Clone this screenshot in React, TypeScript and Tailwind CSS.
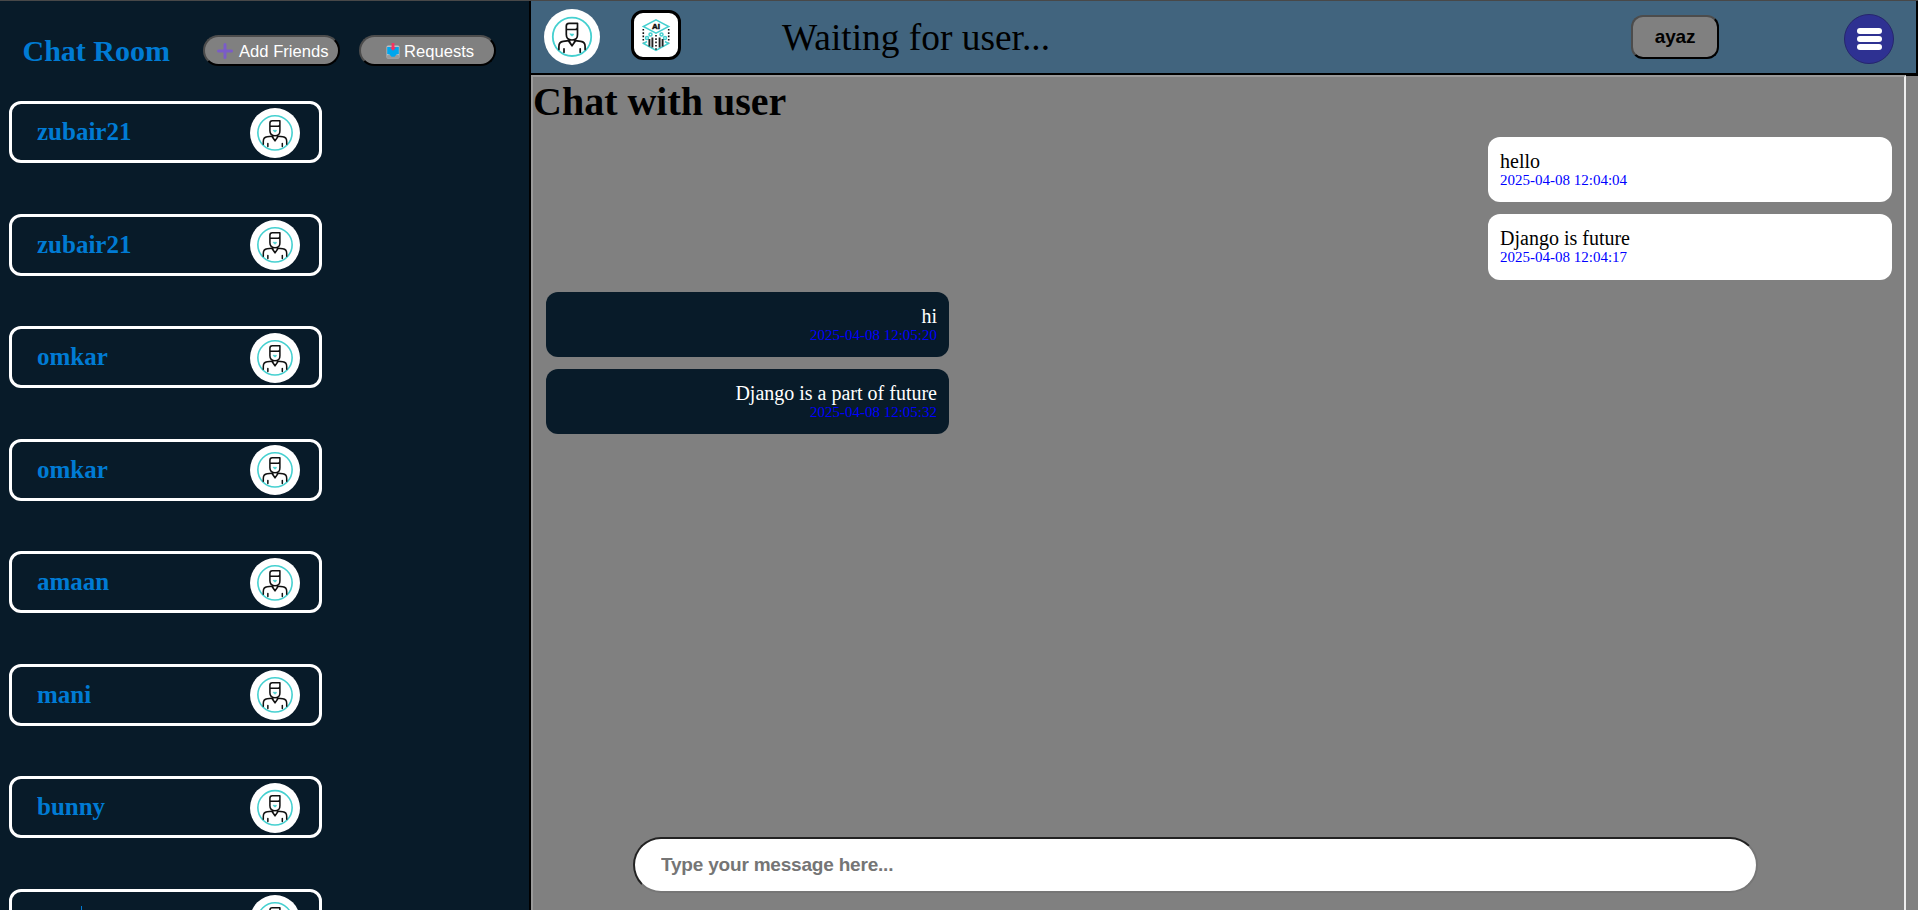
const friends = ["zubair21", "zubair21", "omkar", "omkar", "amaan", "mani", "bunny"];

const messages = [
  { text: "hello", time: "2025-04-08 12:04:04", mine: true },
  { text: "Django is future", time: "2025-04-08 12:04:17", mine: true },
  { text: "hi", time: "2025-04-08 12:05:20", mine: false },
  { text: "Django is a part of future", time: "2025-04-08 12:05:32", mine: false },
];

function Avatar({ className }: { className: string }) {
  return (
    <svg viewBox="0 0 56 56" className={className} fill="none" strokeLinecap="round" strokeLinejoin="round">
      <circle cx="28" cy="28" r="28" fill="#fff" />
      <circle cx="28" cy="27.8" r="19.2" stroke="#45d0d0" strokeWidth="1.8" />
      <g stroke="#111" strokeWidth="1.7">
        <path d="M22.3 20.5V17Q22.3 14.3 25 14.3H33.5V18.2Q33.5 20.5 31.2 20.5H22.3V25.5Q22.3 31 28 31T33.5 25.5V18" />
        <path d="M25.6 30.8V33L28 36.8L30.6 33V30.8M24.6 32L28 36.8L31.4 32" />
        <path d="M14.9 40.5V37.5Q14.9 32.8 19.2 32.3L24.6 31.6M41.1 40.5V37.5Q41.1 32.8 36.8 32.3L31.4 31.6" />
        <path d="M20 43.2V39.8M36.2 43.2V39.8" />
      </g>
      <path d="M26.2 25H29.8Q29.3 27 28 27T26.2 25Z" fill="#45d0d0" stroke="#45d0d0" strokeWidth=".6" />
    </svg>
  );
}

function AiCube() {
  return (
    <svg viewBox="0 0 44 44" className="size-11 shrink-0" fill="none">
      <g stroke="#45d0d0" strokeWidth="1.5">
        <path d="M22 6.8L34.7 13.5L22 20.2L9.3 13.5Z" />
        <path d="M13 28.5L9.5 30.5L22 37.5L34.5 30.5L31 28.5" />
        <circle cx="16.5" cy="21.5" r="1.5" />
        <circle cx="13" cy="25" r="1.5" />
        <circle cx="27.5" cy="21.5" r="1.5" />
        <circle cx="31" cy="25" r="1.5" />
      </g>
      <path d="M9.3 16V29.5M34.7 16V29.5M22 22V37" stroke="#111" strokeWidth="1.6" strokeDasharray="1.6 1.7" />
      <path d="M15.4 26V33.5M18.4 24.5V34.5M25.6 24.5V34.5M28.6 26V33.5" stroke="#222" strokeWidth="1.9" />
      <text x="22" y="16.4" textAnchor="middle" fontSize="8" fontWeight="700" fill="#111" stroke="#111" strokeWidth=".5" className="font-['Liberation_Sans',sans-serif]">AI</text>
    </svg>
  );
}

function PlusIcon() {
  return (
    <svg viewBox="0 0 16 16" className="size-4 shrink-0" stroke="#7a5cc8" strokeWidth="3" strokeLinecap="round">
      <path d="M8 1.5V14.5M1.5 8H14.5" />
    </svg>
  );
}

function InboxIcon() {
  return (
    <svg viewBox="0 0 14 16" className="h-4 w-3.5 shrink-0">
      <rect x=".5" y="2.5" width="13" height="13" rx="1.5" fill="#b8bfc7" />
      <rect x="1" y="12" width="12" height="3.3" rx="1" fill="#9b9b9b" />
      <path d="M1.2 4H12.8V11L10.5 11.5L8.5 13.8H5.5L3.5 11.5L1.2 11Z" fill="#00a6ed" />
      <path d="M5.6 0H8.4V4.4H10L7 7.8L4 4.4H5.6Z" fill="#f8315f" />
    </svg>
  );
}

const pill =
  "flex h-[31px] w-[137px] shrink-0 items-center rounded-[20px] border-2 border-t-[#4c4c4c] border-l-[#4c4c4c] border-r-black border-b-black bg-[#808080] font-['Liberation_Sans',sans-serif] text-[16.6px] leading-none text-white";

const card =
  "flex h-[62px] w-[313px] shrink-0 items-center justify-between rounded-xl border-[3px] border-white pr-[19px] pl-[25px]";

export default function App() {
  return (
    <div className="flex h-[910px] w-[1918px] flex-col overflow-hidden border-t border-[#484848] bg-[#808080] font-['Liberation_Serif',serif]">
      <div className="flex min-h-0 flex-1">
        <aside className="flex w-[531px] shrink-0 flex-col overflow-hidden border-r-2 border-black bg-[#081b29]">
          <div className="flex h-[100px] shrink-0 pl-[22.5px]">
            <h1 className="mt-[33px] w-[180.5px] text-[30px] leading-[34px] font-bold text-[#007bd4]">Chat Room</h1>
            <button className={`${pill} mt-[34px] gap-1.5 pl-3 whitespace-nowrap`}>
              <PlusIcon />
              <span className="pt-[3px]">Add Friends</span>
            </button>
            <button className={`${pill} mt-[34px] ml-[19px] gap-1 pl-[25px]`}>
              <InboxIcon />
              <span className="pt-[3px]">Requests</span>
            </button>
          </div>
          <ul className="flex flex-col gap-[50.5px] pl-[9px]">
            {friends.map((name, i) => (
              <li key={i} className={card}>
                <span className="text-[25px] leading-7 font-bold text-[#007bd4]">{name}</span>
                <Avatar className="mt-px size-[50px]" />
              </li>
            ))}
            <li className={card}>
              <span className="ml-11 h-7 w-px bg-[#007bd4]" />
              <Avatar className="mt-px size-[50px]" />
            </li>
          </ul>
        </aside>

        <main className="flex min-w-0 flex-1 flex-col">
          <header className="flex h-[74px] shrink-0 border-r-2 border-b-2 border-black bg-[#41647e]">
            <Avatar className="mt-2 ml-[13px] size-14 shrink-0" />
            <div className="mt-[9px] ml-[31px] flex size-[50px] shrink-0 items-center justify-center rounded-xl border-[3px] border-black bg-white">
              <AiCube />
            </div>
            <p className="mt-4 ml-[101px] w-[849px] text-[37.4px] leading-[42px] text-black">Waiting for user...</p>
            <button className="mt-3.5 h-11 w-22 shrink-0 rounded-xl border-2 border-t-[#4c4c4c] border-r-black border-b-black border-l-[#4c4c4c] bg-[#808080] pb-0.5 font-['Liberation_Sans',sans-serif] text-[19px] leading-none font-bold tracking-[-0.2px] text-black">
              ayaz
            </button>
            <button className="mt-[13px] ml-[125px] flex size-[50px] shrink-0 flex-col items-center justify-center gap-0.5 rounded-full border border-[#26266c] bg-[#2e3192]">
              <span className="h-1.5 w-[25px] rounded-full bg-white" />
              <span className="h-1.5 w-[25px] rounded-full bg-white" />
              <span className="h-1.5 w-[25px] rounded-full bg-white" />
            </button>
          </header>

          <div className="flex min-h-0 flex-1">
            <section className="flex w-[1375px] shrink-0 flex-col border-t-2 border-r-2 border-l-2 border-t-[#9a9a9a] border-r-[#eee] border-l-[#9a9a9a]">
              <h2 className="mt-0.5 h-[58px] text-[40px] leading-[46px] font-bold text-black">Chat with user</h2>
              <div className="flex flex-col gap-3 pr-3 pl-[13px]">
                {messages.map((m) => (
                  <div
                    key={m.time}
                    className={
                      m.mine
                        ? "flex h-[65.3px] w-[404px] flex-col self-end rounded-xl bg-white px-3 pt-[13px] text-black"
                        : "flex h-[65.3px] w-[403px] flex-col items-end self-start rounded-xl bg-[#081b29] px-3 pt-[13px] text-white"
                    }
                  >
                    <span className="text-xl leading-[22px]">{m.text}</span>
                    <span className="text-[15px] leading-[17px] text-[#0000ff]">{m.time}</span>
                  </div>
                ))}
              </div>
              <input
                placeholder="Type your message here..."
                className="mt-auto mb-[17px] ml-[100px] h-14 w-[1125px] rounded-[28px] border-2 border-t-[#222] border-r-[#767676] border-b-[#767676] border-l-[#222] bg-white px-[26px] font-['Liberation_Sans',sans-serif] text-[19px] font-bold tracking-[-0.2px] text-black placeholder:text-[#757575]"
              />
            </section>
            <div className="h-px flex-1 bg-black" />
          </div>
        </main>
      </div>
    </div>
  );
}
